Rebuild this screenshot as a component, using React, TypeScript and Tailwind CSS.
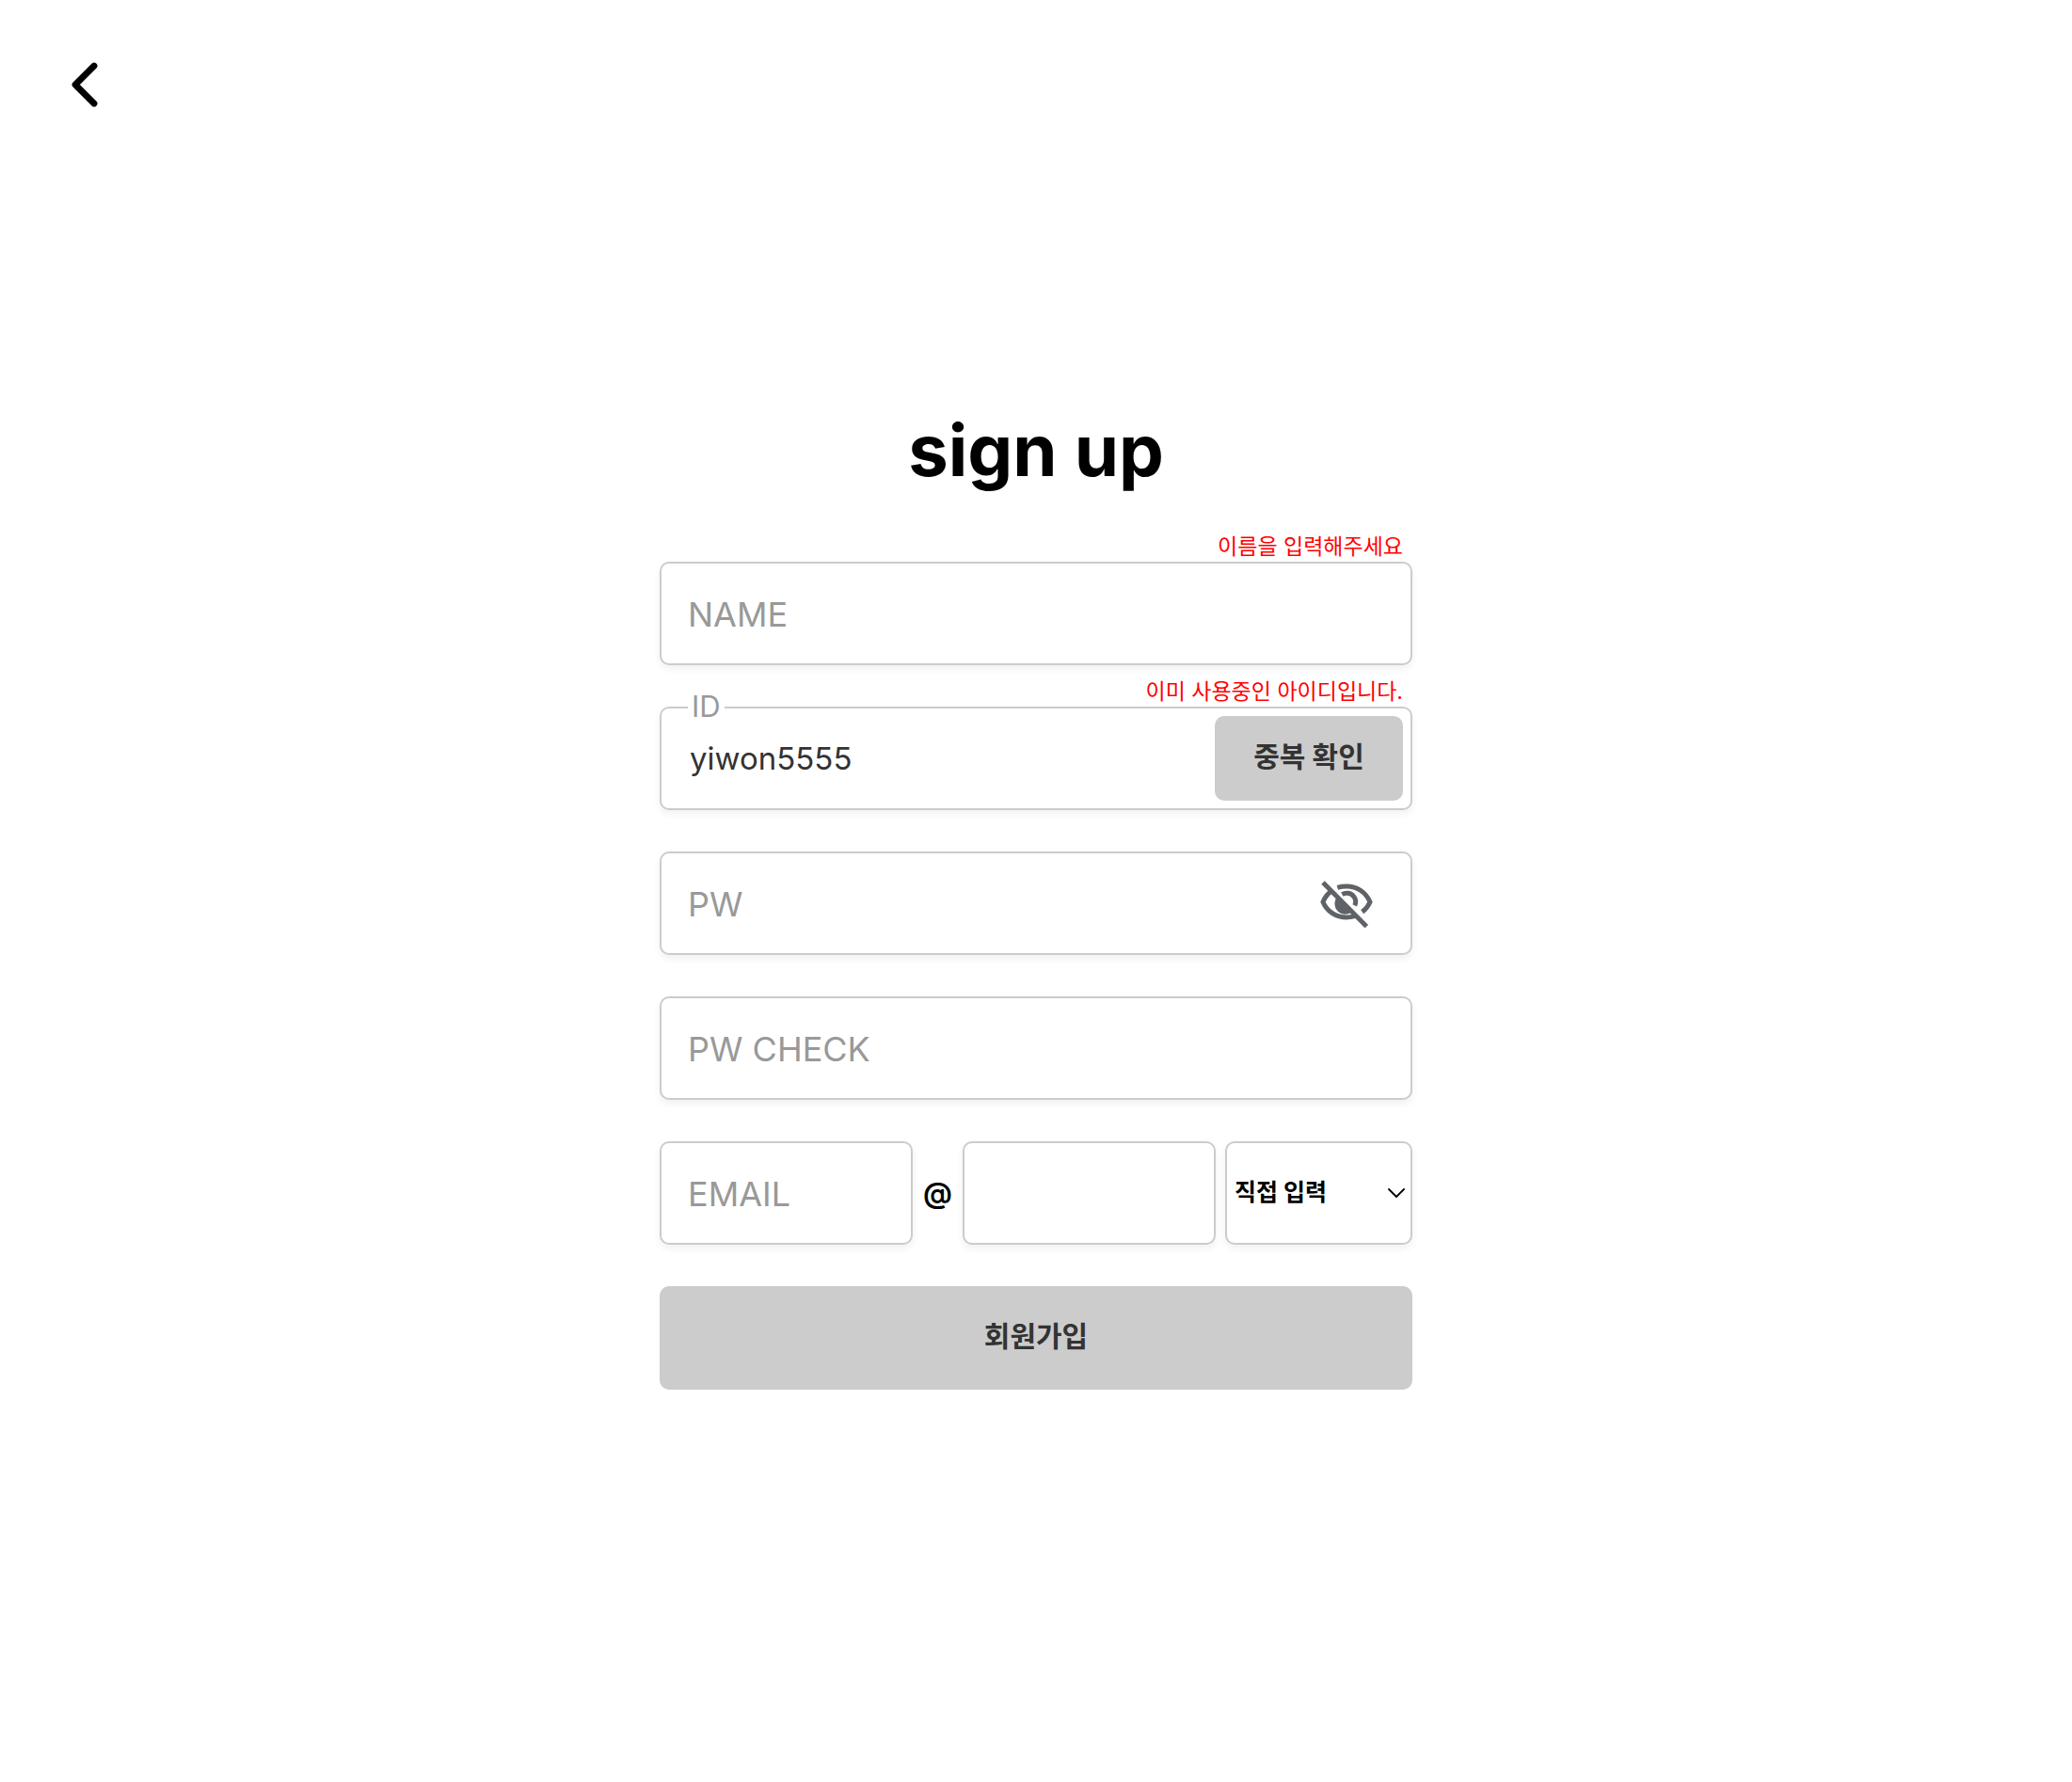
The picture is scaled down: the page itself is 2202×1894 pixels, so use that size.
import { useState } from "react";
import type { InputHTMLAttributes } from "react";

const box =
  "h-[110px] w-full min-w-0 rounded-[10px] border-2 border-[#cccccc] bg-white shadow-[0_4px_8px_rgba(0,0,0,0.06)] outline-none";

function BackIcon() {
  return (
    <svg viewBox="0 0 28 48" className="h-12 w-7" fill="none" aria-hidden="true">
      <path
        d="M24 4 4 24l20 20"
        stroke="black"
        strokeWidth="6.8"
        strokeLinecap="round"
        strokeLinejoin="round"
      />
    </svg>
  );
}

function EyeOffIcon() {
  return (
    <svg viewBox="99 103 168 156" className="h-[52px] w-14" fill="none" aria-hidden="true">
      <g stroke="#5f6368" strokeWidth="15">
        <path d="M137 141Q117 154 108 177C121 207 149 226 183 226Q197 226 209 222" />
        <path d="M154 131Q168 127 183 127C217 127 245 146 258 177Q249 197 233 209" />
        <path d="M169 153Q176 149 183 149A27 27 0 0 1 209 188" />
        <path d="M108 115L247 255" />
      </g>
      <path d="M156 158A33 33 0 0 0 202 207Z" fill="#5f6368" />
    </svg>
  );
}

function ChevronIcon() {
  return (
    <svg
      viewBox="0 0 18 10"
      className="pointer-events-none absolute top-1/2 right-2 h-2.5 w-[18px] -translate-y-1/2"
      fill="none"
      aria-hidden="true"
    >
      <path d="M1 1l8 8 8-8" stroke="black" strokeWidth="1.8" strokeLinecap="round" strokeLinejoin="round" />
    </svg>
  );
}

function ErrorMessage({ id, children }: { id: string; children: string }) {
  return (
    <p id={id} role="alert" className="absolute right-2.5 bottom-full text-[23px] leading-8 text-[#ff0000]">
      {children}
    </p>
  );
}

// The label rests inside an empty box and floats onto the border once there is a value.
function Field({ id, label, ...rest }: { id: string; label: string } & InputHTMLAttributes<HTMLInputElement>) {
  return (
    <>
      <input id={id} placeholder=" " className={`${box} peer px-[30px] text-[33px] text-[#333333]`} {...rest} />
      <label
        htmlFor={id}
        className="absolute top-0 left-[30px] -translate-y-1/2 bg-white px-1 text-[31px] leading-9 text-[#999999] peer-placeholder-shown:top-14 peer-placeholder-shown:px-0 peer-placeholder-shown:text-[36px] peer-placeholder-shown:leading-[44px]"
      >
        {label}
      </label>
    </>
  );
}

export default function App() {
  const [userId, setUserId] = useState("yiwon5555");
  const [showPw, setShowPw] = useState(false);

  return (
    <div className="min-h-screen bg-white font-[Inter,'Noto_Sans_CJK_KR',sans-serif] text-black">
      <header className="px-[76px] pt-[66px]">
        <button type="button" aria-label="뒤로 가기" className="block">
          <BackIcon />
        </button>
      </header>

      <main className="mx-auto w-full max-w-[800px] pt-[316px] pb-16">
        <h1 className="text-center text-[76px] leading-[96px] font-bold">sign up</h1>

        <form className="mt-[71px] flex flex-col gap-11" onSubmit={(e) => e.preventDefault()}>
          <div className="relative">
            <Field id="name" label="NAME" aria-describedby="name-error" />
            <ErrorMessage id="name-error">이름을 입력해주세요</ErrorMessage>
          </div>

          <div className="relative">
            <Field
              id="user-id"
              label="ID"
              value={userId}
              onChange={(e) => setUserId(e.target.value)}
              aria-describedby="id-error"
            />
            <ErrorMessage id="id-error">이미 사용중인 아이디입니다.</ErrorMessage>
            <button
              type="button"
              className="absolute top-2.5 right-2.5 h-[90px] w-[200px] rounded-[10px] bg-[#cccccc] pb-1 text-[30px] font-bold text-[#333333]"
            >
              중복 확인
            </button>
          </div>

          <div className="relative">
            <Field id="pw" label="PW" type={showPw ? "text" : "password"} />
            <button
              type="button"
              aria-label="비밀번호 표시"
              onClick={() => setShowPw(!showPw)}
              className="absolute top-1/2 right-[42px] -translate-y-1/2"
            >
              <EyeOffIcon />
            </button>
          </div>

          <div className="relative">
            <Field id="pw-check" label="PW CHECK" type="password" />
          </div>

          <div className="flex items-center">
            <div className="relative flex-1">
              <Field id="email" label="EMAIL" />
            </div>
            <span className="w-[53px] text-center text-[31px] font-semibold">@</span>
            <div className="flex-1">
              <input
                id="domain"
                aria-label="이메일 도메인"
                className={`${box} px-[30px] text-[33px] text-[#333333]`}
              />
            </div>
            <div className="relative ml-2.5 w-[199px]">
              <select
                id="domain-select"
                aria-label="도메인 선택"
                className={`${box} appearance-none px-2 text-[25px] font-bold`}
              >
                <option>직접 입력</option>
                <option>naver.com</option>
                <option>gmail.com</option>
              </select>
              <ChevronIcon />
            </div>
          </div>

          <button
            type="submit"
            className="h-[110px] w-full rounded-[10px] bg-[#cccccc] pb-1 text-[30px] font-bold text-[#333333]"
          >
            회원가입
          </button>
        </form>
      </main>
    </div>
  );
}
